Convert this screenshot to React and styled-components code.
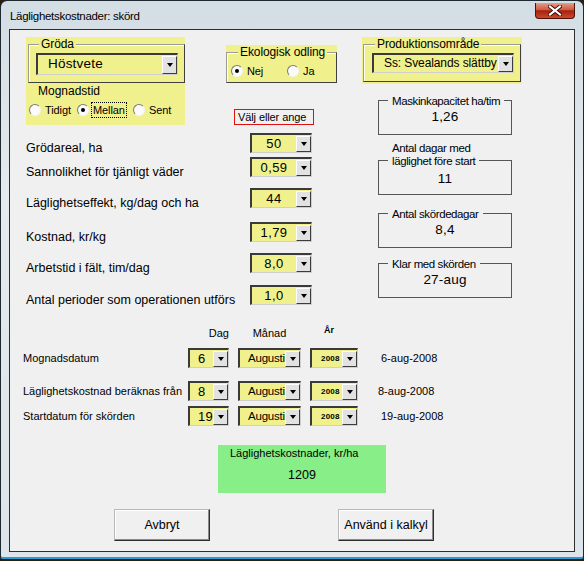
import React from "react"
import styled, { createGlobalStyle } from "styled-components"

const yellow = "#f0f08c"
const face = "#f0f0f0"

const GlobalStyle = createGlobalStyle`
  html, body {
    margin: 0;
    padding: 0;
    background: #2a1d12;
  }
  body {
    width: 584px;
    height: 561px;
    overflow: hidden;
    font-family: "Liberation Sans", Arial, sans-serif;
    color: #000;
  }
`

const Window = styled.div`
  width: 584px;
  height: 559px;
  box-sizing: border-box;
  border: 1px solid #1d2830;
  border-bottom: 2px solid #2a9ad4;
  border-radius: 7px 7px 3px 3px;
  background: linear-gradient(180deg, #d3dde4 0%, #e4eaee 35%, #dde5ea 100%);
  display: flex;
  flex-direction: column;
`

const TitleBar = styled.div`
  height: 28px;
  display: flex;
  justify-content: space-between;
  align-items: flex-start;
  padding-left: 9px;
`

const Title = styled.div`
  margin-top: 8px;
  font-size: 11.5px;
  letter-spacing: -0.3px;
  line-height: 14px;
`

const CloseBtn = styled.div`
  width: 40px;
  height: 16px;
  margin: 2px 8px 0 0;
  box-sizing: border-box;
  border: 1px solid #4a1208;
  border-top: none;
  border-radius: 0 0 4px 4px;
  background: linear-gradient(180deg, #e59c8a 0%, #cf5a42 45%, #a8200c 52%, #c84a2e 100%);
  display: flex;
  align-items: center;
  justify-content: center;
`

const Client = styled.div`
  margin: 0 8px;
  height: 523px;
  box-sizing: border-box;
  border: 1px solid #2e2e2e;
  background: ${face};
  padding: 7px 0 0 16px;
`

const Upper = styled.div`
  display: flex;
`

const LeftCol = styled.div`
  width: 336px;
  display: flex;
  flex-direction: column;
`

const RightCol = styled.div`
  width: 160px;
  display: flex;
  flex-direction: column;
`

const TopRow = styled.div`
  display: flex;
`

const Panel = styled.div`
  width: ${p => p.$w}px;
  height: ${p => p.$h}px;
  margin-top: ${p => p.$mt || 0}px;
  box-sizing: border-box;
  background: ${yellow};
  padding-top: 7px;
`

const Frame = styled.div`
  margin-left: ${p => p.$ml || 0}px;
  width: ${p => p.$w}px;
  box-sizing: border-box;
  border: 1px solid;
  border-color: #9a9a9a #404040 #404040 #9a9a9a;
  box-shadow: inset 1px 1px 0 #fff;
  padding-bottom: ${p => p.$pb || 0}px;
`

const Legend = styled.div`
  width: fit-content;
  margin: -8px 0 0 ${p => p.$ml || 10}px;
  padding: 0 2px;
  background: ${yellow};
  font-size: 12px;
  line-height: 15px;
  letter-spacing: -0.1px;
`

const ComboBox = styled.div`
  display: flex;
  box-sizing: border-box;
  width: ${p => p.$w}px;
  height: ${p => p.$h || 20}px;
  margin: ${p => p.$m || "0"};
  background: ${yellow};
  border-style: solid;
  border-width: 2px 1px 1px 2px;
  border-color: #3a3a3a #cfcfcf #cfcfcf #3a3a3a;
`

const ComboValue = styled.div`
  flex: 1;
  min-width: 0;
  overflow: hidden;
  white-space: nowrap;
  text-align: ${p => p.$align || "left"};
  padding-left: ${p => p.$pl || 0}px;
  font-size: ${p => p.$fs || 13}px;
  font-weight: ${p => p.$bold ? 700 : 400};
  line-height: ${p => p.$lh || 17}px;
  letter-spacing: ${p => p.$ls ?? 0.4}px;
`

const ComboArrow = styled.div`
  width: 15px;
  box-sizing: border-box;
  margin: 1px 0 0 0;
  background: #e2e2e2;
  border: 1px solid;
  border-color: #fff #3c3c3c #3c3c3c #fff;
  display: flex;
  align-items: center;
  justify-content: center;
  &::after {
    content: "";
    border-left: 3.5px solid transparent;
    border-right: 3.5px solid transparent;
    border-top: 4px solid #000;
  }
`

const Combo = ({ value, w, h, m, align, pl, fs, bold, lh, ls }) => (
  <ComboBox $w={w} $h={h} $m={m}>
    <ComboValue $align={align} $pl={pl} $fs={fs} $bold={bold} $lh={lh} $ls={ls}>{value}</ComboValue>
    <ComboArrow />
  </ComboBox>
)

const SubLabel = styled.div`
  margin: 1px 0 0 12px;
  font-size: 12px;
  line-height: 15px;
`

const RadioRow = styled.div`
  display: flex;
  align-items: center;
  height: 16px;
  margin-top: ${p => p.$mt || 0}px;
  padding-left: ${p => p.$pl || 0}px;
`

const RadioItem = styled.label`
  display: flex;
  align-items: center;
  gap: 3px;
  width: ${p => (p.$w ? `${p.$w}px` : "auto")};
  font-size: 11px;
  line-height: 14px;
  letter-spacing: -0.1px;
`

const RadioDot = styled.span`
  width: 12px;
  height: 12px;
  box-sizing: border-box;
  border-radius: 50%;
  border: 1px solid;
  border-color: #7a7a7a #f4f4f4 #f4f4f4 #7a7a7a;
  background: #fbfbfb;
  display: flex;
  align-items: center;
  justify-content: center;
  &::after {
    content: "";
    display: ${p => (p.$on ? "block" : "none")};
    width: 4px;
    height: 4px;
    border-radius: 50%;
    background: #000;
  }
`

const RadioText = styled.span`
  padding: 0 1px;
  outline: ${p => (p.$focus ? "1px dotted #000" : "none")};
`

const Radio = ({ label, on, focus, w }) => (
  <RadioItem $w={w}>
    <RadioDot $on={on} />
    <RadioText $focus={focus}>{label}</RadioText>
  </RadioItem>
)

const MidCol = styled.div`
  margin-left: 41px;
  width: 111px;
  display: flex;
  flex-direction: column;
`

const HintBox = styled.div`
  margin: 26px 0 0 8px;
  width: 80px;
  height: 16px;
  box-sizing: border-box;
  border: 1px solid #e01010;
  font-size: 11px;
  line-height: 14px;
  padding-left: 3px;
  letter-spacing: -0.1px;
`

const ParamRow = styled.div`
  display: flex;
  height: 20px;
  margin-top: ${p => p.$mt}px;
`

const ParamLabel = styled.div`
  width: 224px;
  margin-top: 7px;
  font-size: 12.5px;
  line-height: 16px;
  white-space: nowrap;
`

const ResultFrame = styled.div`
  margin: ${p => p.$mt}px 0 0 16px;
  width: 134px;
  height: 35px;
  box-sizing: border-box;
  border: 1px solid #555;
  display: flex;
  flex-direction: column;
`

const ResultLegend = styled.div`
  width: fit-content;
  margin: ${p => (p.$two ? -19 : -7)}px 0 0 9px;
  padding: 0 4px;
  background: ${face};
  font-size: 11.5px;
  line-height: ${p => (p.$two ? 12.5 : 14)}px;
  letter-spacing: -0.4px;
`

const ResultValue = styled.div`
  margin-top: ${p => p.$mt}px;
  text-align: center;
  font-size: 13.5px;
  line-height: 16px;
  letter-spacing: 0.2px;
`

const DateSection = styled.div`
  margin: 21px 0 0 -3px;
  display: flex;
  flex-direction: column;
`

const DateGrid = styled.div`
  display: grid;
  grid-template-columns: 156px 41px 63px 48px auto;
  column-gap: 9px;
  align-items: center;
  height: ${p => p.$h || 20}px;
  margin-top: ${p => p.$mt || 0}px;
`

const HeadCell = styled.div`
  font-size: ${p => p.$small ? 9 : 11}px;
  font-weight: ${p => p.$small ? 700 : 400};
  line-height: 14px;
  text-align: ${p => p.$align || "center"};
  padding-right: ${p => p.$pr || 0}px;
  align-self: ${p => p.$small ? "start" : "center"};
  margin-top: ${p => p.$small ? -3 : 0}px;
`

const DateLabel = styled.div`
  font-size: 11px;
  line-height: 16px;
  white-space: nowrap;
`

const DateText = styled.div`
  padding-left: ${p => p.$pl}px;
  font-size: 11px;
  line-height: 16px;
`

const CostBox = styled.div`
  margin: 19px 0 0 192px;
  width: 168px;
  height: 48px;
  box-sizing: border-box;
  background: #88ee88;
  padding: 2px 0 0 12px;
`

const CostLabel = styled.div`
  font-size: 11px;
  line-height: 13px;
`

const CostValue = styled.div`
  margin: 7px 0 0 -12px;
  text-align: center;
  font-size: 12.5px;
  line-height: 16px;
`

const ButtonRow = styled.div`
  display: flex;
  gap: 128px;
  margin: 16px 0 0 88px;
`

const Button = styled.button`
  width: 96px;
  height: 32px;
  box-sizing: border-box;
  background: ${face};
  border: 1px solid;
  border-color: #b8b8b8 #2e2e2e #2e2e2e #b8b8b8;
  box-shadow: inset -1px -1px 0 #8a8a8a, inset 1px 1px 0 #fff;
  font-family: "Liberation Sans", Arial, sans-serif;
  font-size: 12.5px;
  color: #000;
  padding: 0;
`

const params = [
  { label: "Grödareal, ha", value: "50", mt: 8 },
  { label: "Sannolikhet för tjänligt väder", value: "0,59", mt: 4 },
  { label: "Läglighetseffekt, kg/dag och ha", value: "44", mt: 11 },
  { label: "Kostnad, kr/kg", value: "1,79", mt: 14 },
  { label: "Arbetstid i fält, tim/dag", value: "8,0", mt: 11 },
  { label: "Antal perioder som operationen utförs", value: "1,0", mt: 12 },
]

const dates = [
  { label: "Mognadsdatum", day: "6", text: "6-aug-2008", mt: 8, pl: 14 },
  { label: "Läglighetskostnad beräknas från", day: "8", text: "8-aug-2008", mt: 13, pl: 11 },
  { label: "Startdatum för skörden", day: "19", text: "19-aug-2008", mt: 5, pl: 14 },
]

export default function App() {
  return (
    <>
      <GlobalStyle />
      <Window>
        <TitleBar>
          <Title>Läglighetskostnader: skörd</Title>
          <CloseBtn>
            <svg width="14" height="11" viewBox="0 0 14 11">
              <path d="M2 1.5 L12 9.5 M12 1.5 L2 9.5" stroke="#3a0a04" strokeWidth="4" strokeLinecap="square" />
              <path d="M2 1.5 L12 9.5 M12 1.5 L2 9.5" stroke="#fff" strokeWidth="2.2" strokeLinecap="square" />
            </svg>
          </CloseBtn>
        </TitleBar>
        <Client>
          <Upper>
            <LeftCol>
              <TopRow>
                <Panel $w={159} $h={88}>
                  <Frame $ml={2} $w={157} $pb={7}>
                    <Legend>Gröda</Legend>
                    <Combo value="Höstvete" w={142} h={22} m="1px 0 0 7px" pl={10} fs={13.5} lh={18} ls={0.2} />
                  </Frame>
                  <SubLabel>Mognadstid</SubLabel>
                  <RadioRow $mt={3} $pl={3}>
                    <Radio label="Tidigt" w={48} />
                    <Radio label="Mellan" on focus w={56} />
                    <Radio label="Sent" />
                  </RadioRow>
                </Panel>
                <MidCol>
                  <Panel $w={111} $h={38} $mt={8}>
                    <Frame $w={111} $pb={3}>
                      <Legend $ml={11}>Ekologisk odling</Legend>
                      <RadioRow $mt={3} $pl={4}>
                        <Radio label="Nej" on w={56} />
                        <Radio label="Ja" />
                      </RadioRow>
                    </Frame>
                  </Panel>
                  <HintBox>Välj eller ange</HintBox>
                </MidCol>
              </TopRow>
              {params.map(p => (
                <ParamRow key={p.label} $mt={p.mt}>
                  <ParamLabel>{p.label}</ParamLabel>
                  <Combo value={p.value} w={62} align="center" />
                </ParamRow>
              ))}
            </LeftCol>
            <RightCol>
              <Panel $w={160} $h={47}>
                <Frame $ml={1} $w={158} $pb={8}>
                  <Legend $ml={11}>Produktionsområde</Legend>
                  <Combo value="Ss: Svealands slättby" w={142} h={20} m="1px 0 0 8px" pl={10} fs={12} lh={17} ls={-0.1} />
                </Frame>
              </Panel>
              <ResultFrame $mt={16}>
                <ResultLegend>Maskinkapacitet ha/tim</ResultLegend>
                <ResultValue $mt={1}>1,26</ResultValue>
              </ResultFrame>
              <ResultFrame $mt={25}>
                <ResultLegend $two>Antal dagar med<br />läglighet före start</ResultLegend>
                <ResultValue $mt={4}>11</ResultValue>
              </ResultFrame>
              <ResultFrame $mt={18}>
                <ResultLegend>Antal skördedagar</ResultLegend>
                <ResultValue $mt={1}>8,4</ResultValue>
              </ResultFrame>
              <ResultFrame $mt={15}>
                <ResultLegend>Klar med skörden</ResultLegend>
                <ResultValue $mt={1}>27-aug</ResultValue>
              </ResultFrame>
            </RightCol>
          </Upper>
          <DateSection>
            <DateGrid $h={14}>
              <span />
              <HeadCell $align="right">Dag</HeadCell>
              <HeadCell>Månad</HeadCell>
              <HeadCell $small $pr={10}>År</HeadCell>
              <span />
            </DateGrid>
            {dates.map(d => (
              <DateGrid key={d.label} $mt={d.mt}>
                <DateLabel>{d.label}</DateLabel>
                <Combo value={d.day} w={41} pl={8} fs={13} ls={0.2} />
                <Combo value="Augusti" w={63} pl={8} fs={11.5} ls={-0.2} />
                <Combo value="2008" w={48} pl={9} fs={8} bold lh={17} ls={0.2} />
                <DateText $pl={d.pl}>{d.text}</DateText>
              </DateGrid>
            ))}
          </DateSection>
          <CostBox>
            <CostLabel>Läglighetskostnader, kr/ha</CostLabel>
            <CostValue>1209</CostValue>
          </CostBox>
          <ButtonRow>
            <Button>Avbryt</Button>
            <Button>Använd i kalkyl</Button>
          </ButtonRow>
        </Client>
      </Window>
    </>
  )
}
